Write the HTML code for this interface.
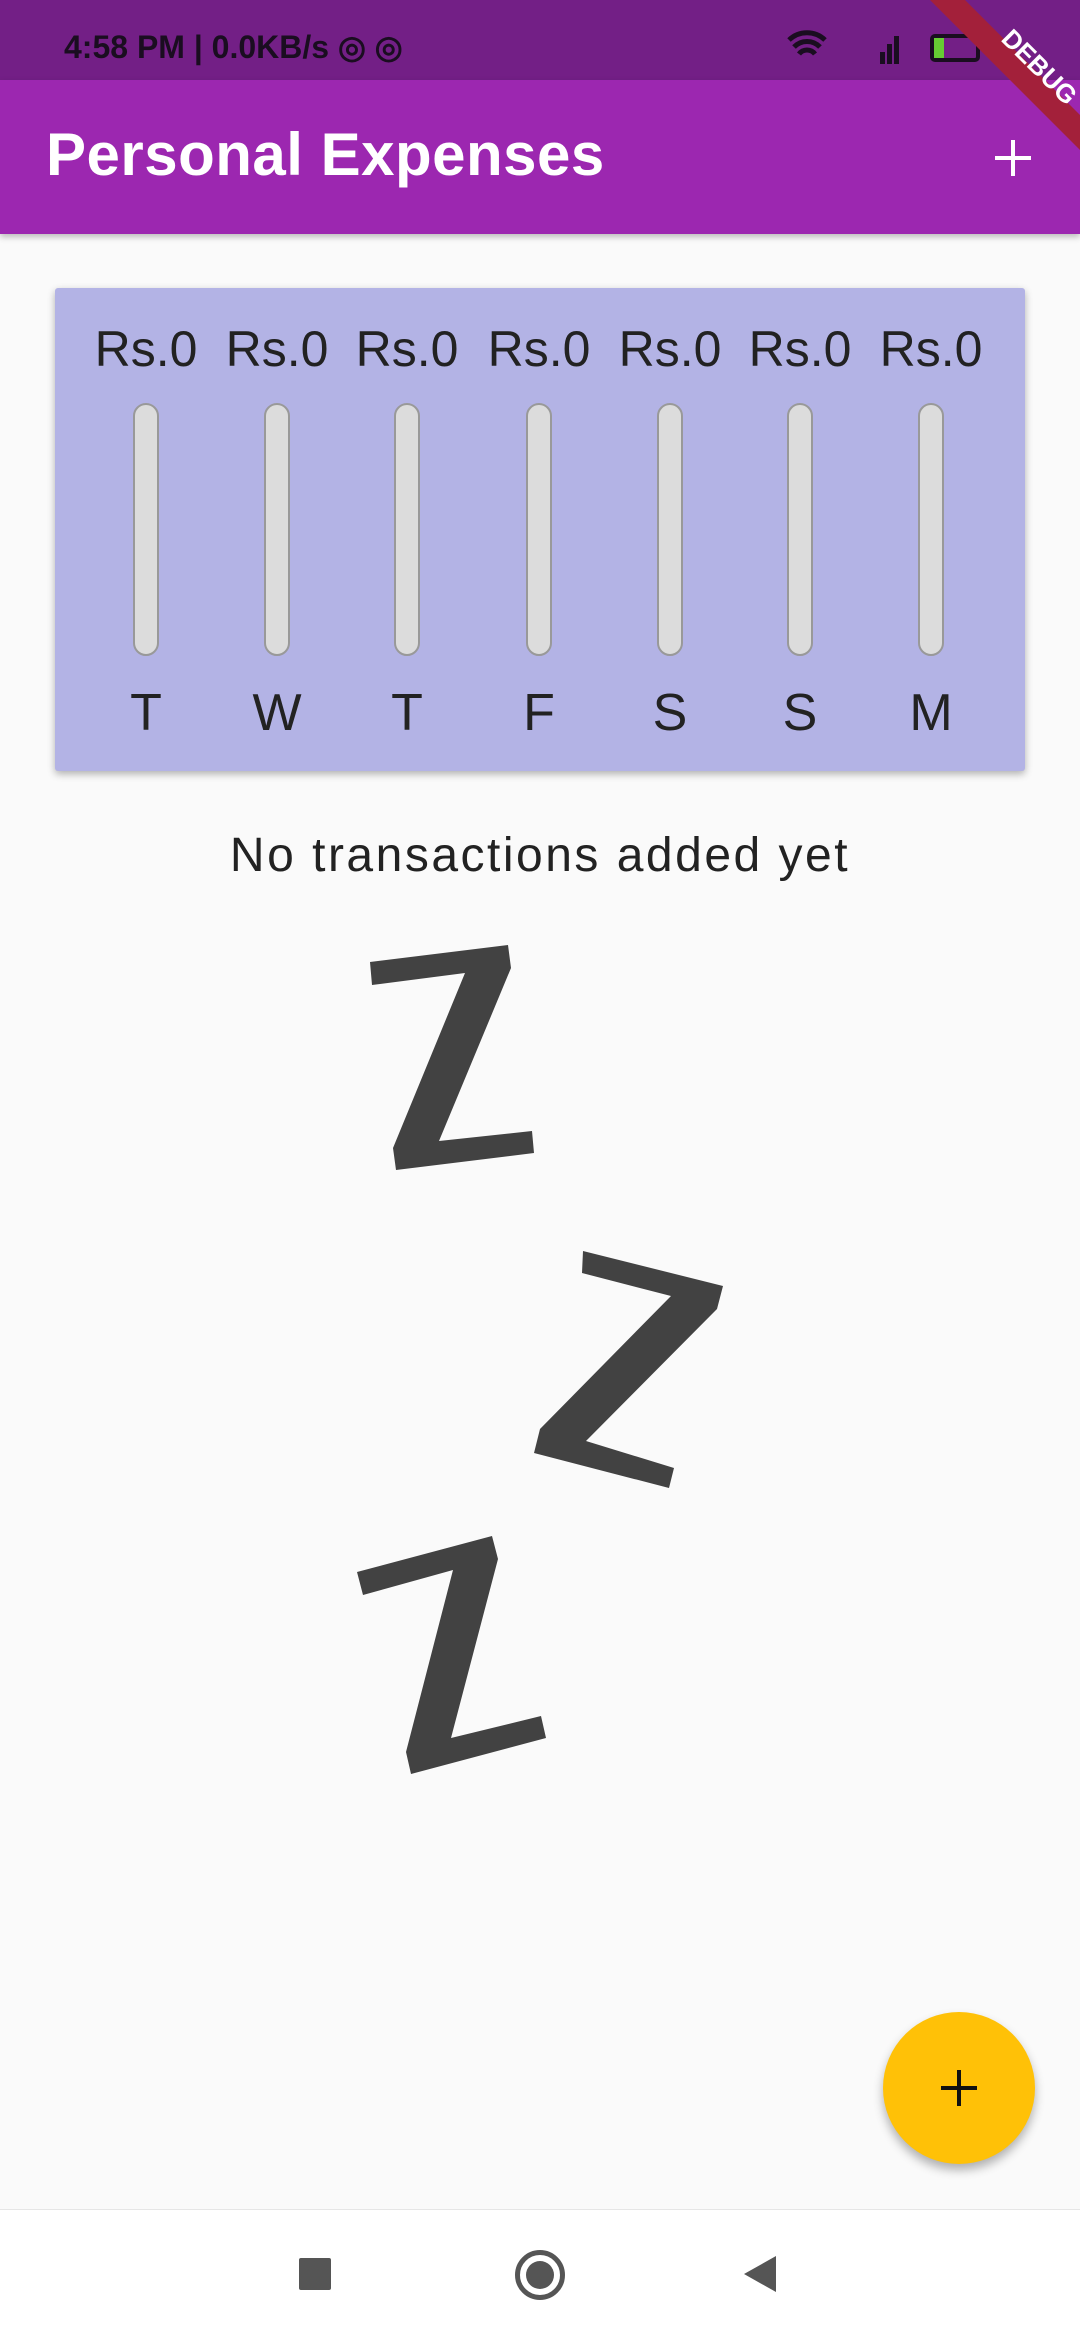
<!DOCTYPE html>
<html><head><meta charset="utf-8"><style>
*{margin:0;padding:0;box-sizing:border-box}
body{width:1080px;height:2340px;background:#fafafa;font-family:"Liberation Sans",sans-serif;position:relative;overflow:hidden}
.status{position:absolute;left:0;top:0;width:1080px;height:80px;background:#731f86}
.app{position:absolute;left:0;top:80px;width:1080px;height:154px;background:#9c27b0;box-shadow:0 3px 6px rgba(0,0,0,.25)}
.title{position:absolute;left:46px;top:40px;color:#fff;font-weight:bold;font-size:60px;letter-spacing:0.5px}
.card{position:absolute;left:55px;top:288px;width:970px;height:483px;background:#b3b3e5;box-shadow:0 3px 8px rgba(0,0,0,.3);border-radius:3px}
.col{position:absolute;top:0;width:130px;text-align:center}
.amt{position:absolute;top:32px;width:130px;font-size:50px;color:#222;text-align:center}
.bar{position:absolute;top:115px;left:52px;width:26px;height:253px;border:2px solid #999;background:#dcdcdc;border-radius:13px}
.day{position:absolute;top:395px;width:130px;font-size:52px;color:#222;text-align:center}
.msg{position:absolute;top:828px;width:1080px;text-align:center;font-size:48px;letter-spacing:2.5px;color:#222}
.fab{position:absolute;left:883px;top:2012px;width:152px;height:152px;border-radius:50%;background:#ffc107;box-shadow:0 6px 10px rgba(0,0,0,.3)}
.nav{position:absolute;left:0;top:2209px;width:1080px;height:131px;background:#fff;border-top:1px solid #e6e6e6}
</style></head><body>
<div class="status">
<div style="position:absolute;left:64px;top:28px;font-size:32px;font-weight:bold;color:#1a0d20">4:58 PM | 0.0KB/s ◎ ◎</div>
<svg style="position:absolute;left:785px;top:28px" width="120" height="40"><path d="M4 12a26 26 0 0 1 36 0M9 19a18 18 0 0 1 26 0M14 26a10 10 0 0 1 16 0" stroke="#1a0d20" stroke-width="5" fill="none"/><rect x="95" y="24" width="5" height="12" fill="#1a0d20"/><rect x="102" y="16" width="5" height="20" fill="#1a0d20"/><rect x="109" y="8" width="5" height="28" fill="#1a0d20"/></svg>
<div style="position:absolute;left:930px;top:34px;width:50px;height:28px;border:4px solid #1a0d20;border-radius:5px"><div style="width:10px;height:100%;background:#6c3"></div></div>
</div>
<div class="app"><div class="title">Personal Expenses</div>
<svg style="position:absolute;left:993px;top:58px" width="40" height="40"><path d="M20 2v36M2 20h36" stroke="#fff" stroke-width="4"/></svg></div>
<svg style="position:absolute;left:900px;top:0" width="180" height="180"><polygon points="30,0 65,0 180,115 180,150" fill="#a3203a"/><text x="0" y="0" transform="translate(100,40) rotate(45)" fill="#fff" font-family="Liberation Sans" font-weight="bold" font-size="26">DEBUG</text></svg>
<div class="card">
<div class="col" style="left:26px"><div class="amt">Rs.0</div><div class="bar"></div><div class="day">T</div></div>
<div class="col" style="left:157px"><div class="amt">Rs.0</div><div class="bar"></div><div class="day">W</div></div>
<div class="col" style="left:287px"><div class="amt">Rs.0</div><div class="bar"></div><div class="day">T</div></div>
<div class="col" style="left:419px"><div class="amt">Rs.0</div><div class="bar"></div><div class="day">F</div></div>
<div class="col" style="left:550px"><div class="amt">Rs.0</div><div class="bar"></div><div class="day">S</div></div>
<div class="col" style="left:680px"><div class="amt">Rs.0</div><div class="bar"></div><div class="day">S</div></div>
<div class="col" style="left:811px"><div class="amt">Rs.0</div><div class="bar"></div><div class="day">M</div></div>
</div>
<div class="msg">No transactions added yet</div>
<svg style="position:absolute;left:0;top:0" width="1080" height="2340">
<polygon fill="#424242" points="370,962 508,945 511,968 439,1141 532,1131 534,1153 396,1170 393,1148 465,973 372,985"/>
<polygon fill="#424242" points="583,1251 723,1286 717,1309 586,1441 674,1468 669,1488 534,1453 540,1429 671,1296 582,1273"/>
<polygon fill="#424242" points="357,1572 492,1536 498,1559 451,1738 541,1716 546,1738 411,1774 406,1752 453,1570 363,1595"/>
</svg>
<div class="fab"><svg style="position:absolute;left:56px;top:56px" width="40" height="40"><path d="M20 2v36M2 20h36" stroke="#111" stroke-width="4"/></svg></div>
<div class="nav">
<div style="position:absolute;left:299px;top:48px;width:32px;height:32px;background:#555;border-radius:2px"></div>
<div style="position:absolute;left:515px;top:40px;width:50px;height:50px;border:5px solid #555;border-radius:50%"><div style="position:absolute;left:6px;top:6px;width:28px;height:28px;background:#555;border-radius:50%"></div></div>
<svg style="position:absolute;left:742px;top:44px" width="36" height="40"><polygon points="34,2 34,38 2,20" fill="#555"/></svg>
</div>
</body></html>
